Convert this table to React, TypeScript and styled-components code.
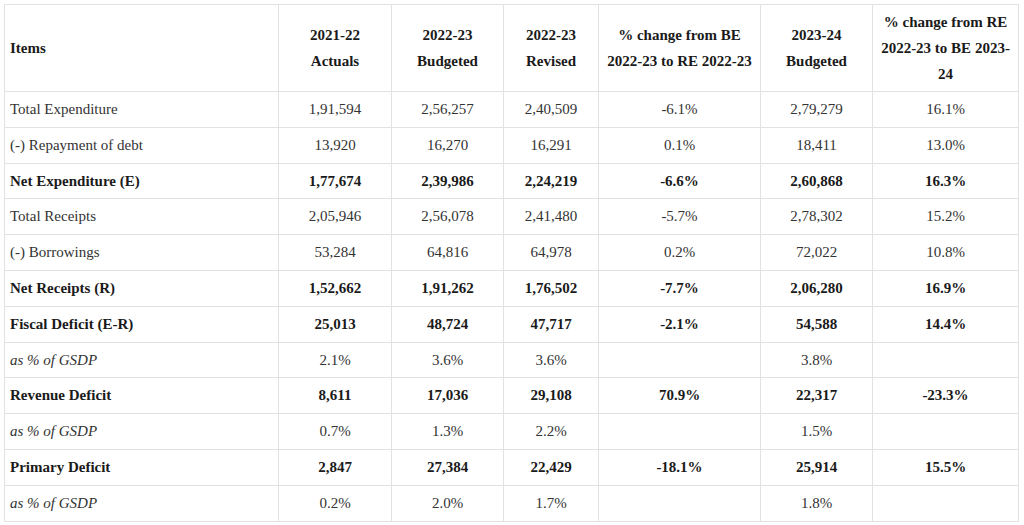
import React from "react";
import styled, { createGlobalStyle } from "styled-components";

const Global = createGlobalStyle`
  html, body { margin: 0; padding: 0; background: #fff; }
  body { font-family: "Liberation Serif", "Times New Roman", serif; }
`;

const Page = styled.div`
  padding: 4px 6px 0 4px;
`;

const Table = styled.table`
  width: 1014px;
  table-layout: fixed;
  border-collapse: collapse;
  font-family: "Liberation Serif", "Times New Roman", serif;
  font-size: 15px;
  color: #333;
`;

const HeadCell = styled.th<{ $align?: "left" | "center" }>`
  border: 1px solid #e2e2e2;
  padding: 4px 5px;
  line-height: 26px;
  font-weight: bold;
  color: #1a1a1a;
  text-align: ${(p) => p.$align ?? "center"};
  vertical-align: middle;
`;

const Cell = styled.td<{ $bold?: boolean; $italic?: boolean; $align?: "left" | "center" }>`
  border: 1px solid #e2e2e2;
  padding: 5px 5px;
  line-height: 24.8px;
  text-align: ${(p) => p.$align ?? "center"};
  font-weight: ${(p) => (p.$bold ? "bold" : "normal")};
  font-style: ${(p) => (p.$italic ? "italic" : "normal")};
  color: ${(p) => (p.$bold ? "#1a1a1a" : "#333")};
  white-space: nowrap;
`;

type Kind = "normal" | "bold" | "italic";

const rows: { label: string; kind: Kind; values: string[] }[] = [
  { label: "Total Expenditure", kind: "normal", values: ["1,91,594", "2,56,257", "2,40,509", "-6.1%", "2,79,279", "16.1%"] },
  { label: "(-) Repayment of debt", kind: "normal", values: ["13,920", "16,270", "16,291", "0.1%", "18,411", "13.0%"] },
  { label: "Net Expenditure (E)", kind: "bold", values: ["1,77,674", "2,39,986", "2,24,219", "-6.6%", "2,60,868", "16.3%"] },
  { label: "Total Receipts", kind: "normal", values: ["2,05,946", "2,56,078", "2,41,480", "-5.7%", "2,78,302", "15.2%"] },
  { label: "(-) Borrowings", kind: "normal", values: ["53,284", "64,816", "64,978", "0.2%", "72,022", "10.8%"] },
  { label: "Net Receipts (R)", kind: "bold", values: ["1,52,662", "1,91,262", "1,76,502", "-7.7%", "2,06,280", "16.9%"] },
  { label: "Fiscal Deficit (E-R)", kind: "bold", values: ["25,013", "48,724", "47,717", "-2.1%", "54,588", "14.4%"] },
  { label: "as % of GSDP", kind: "italic", values: ["2.1%", "3.6%", "3.6%", "", "3.8%", ""] },
  { label: "Revenue Deficit", kind: "bold", values: ["8,611", "17,036", "29,108", "70.9%", "22,317", "-23.3%"] },
  { label: "as % of GSDP", kind: "italic", values: ["0.7%", "1.3%", "2.2%", "", "1.5%", ""] },
  { label: "Primary Deficit", kind: "bold", values: ["2,847", "27,384", "22,429", "-18.1%", "25,914", "15.5%"] },
  { label: "as % of GSDP", kind: "italic", values: ["0.2%", "2.0%", "1.7%", "", "1.8%", ""] },
];

const widths = [274, 113, 112, 95, 162, 112, 146];

export default function App() {
  return (
    <>
      <Global />
      <Page>
        <Table>
          <colgroup>
            {widths.map((w, i) => (
              <col key={i} style={{ width: w }} />
            ))}
          </colgroup>
          <thead>
            <tr>
              <HeadCell $align="left">Items</HeadCell>
              <HeadCell>2021-22<br />Actuals</HeadCell>
              <HeadCell>2022-23<br />Budgeted</HeadCell>
              <HeadCell>2022-23<br />Revised</HeadCell>
              <HeadCell>% change from BE 2022-23 to RE 2022-23</HeadCell>
              <HeadCell>2023-24<br />Budgeted</HeadCell>
              <HeadCell>% change from RE 2022-23 to BE 2023-24</HeadCell>
            </tr>
          </thead>
          <tbody>
            {rows.map((r, i) => (
              <tr key={i}>
                <Cell $align="left" $bold={r.kind === "bold"} $italic={r.kind === "italic"}>
                  {r.label}
                </Cell>
                {r.values.map((v, j) => (
                  <Cell key={j} $bold={r.kind === "bold"}>
                    {v}
                  </Cell>
                ))}
              </tr>
            ))}
          </tbody>
        </Table>
      </Page>
    </>
  );
}
